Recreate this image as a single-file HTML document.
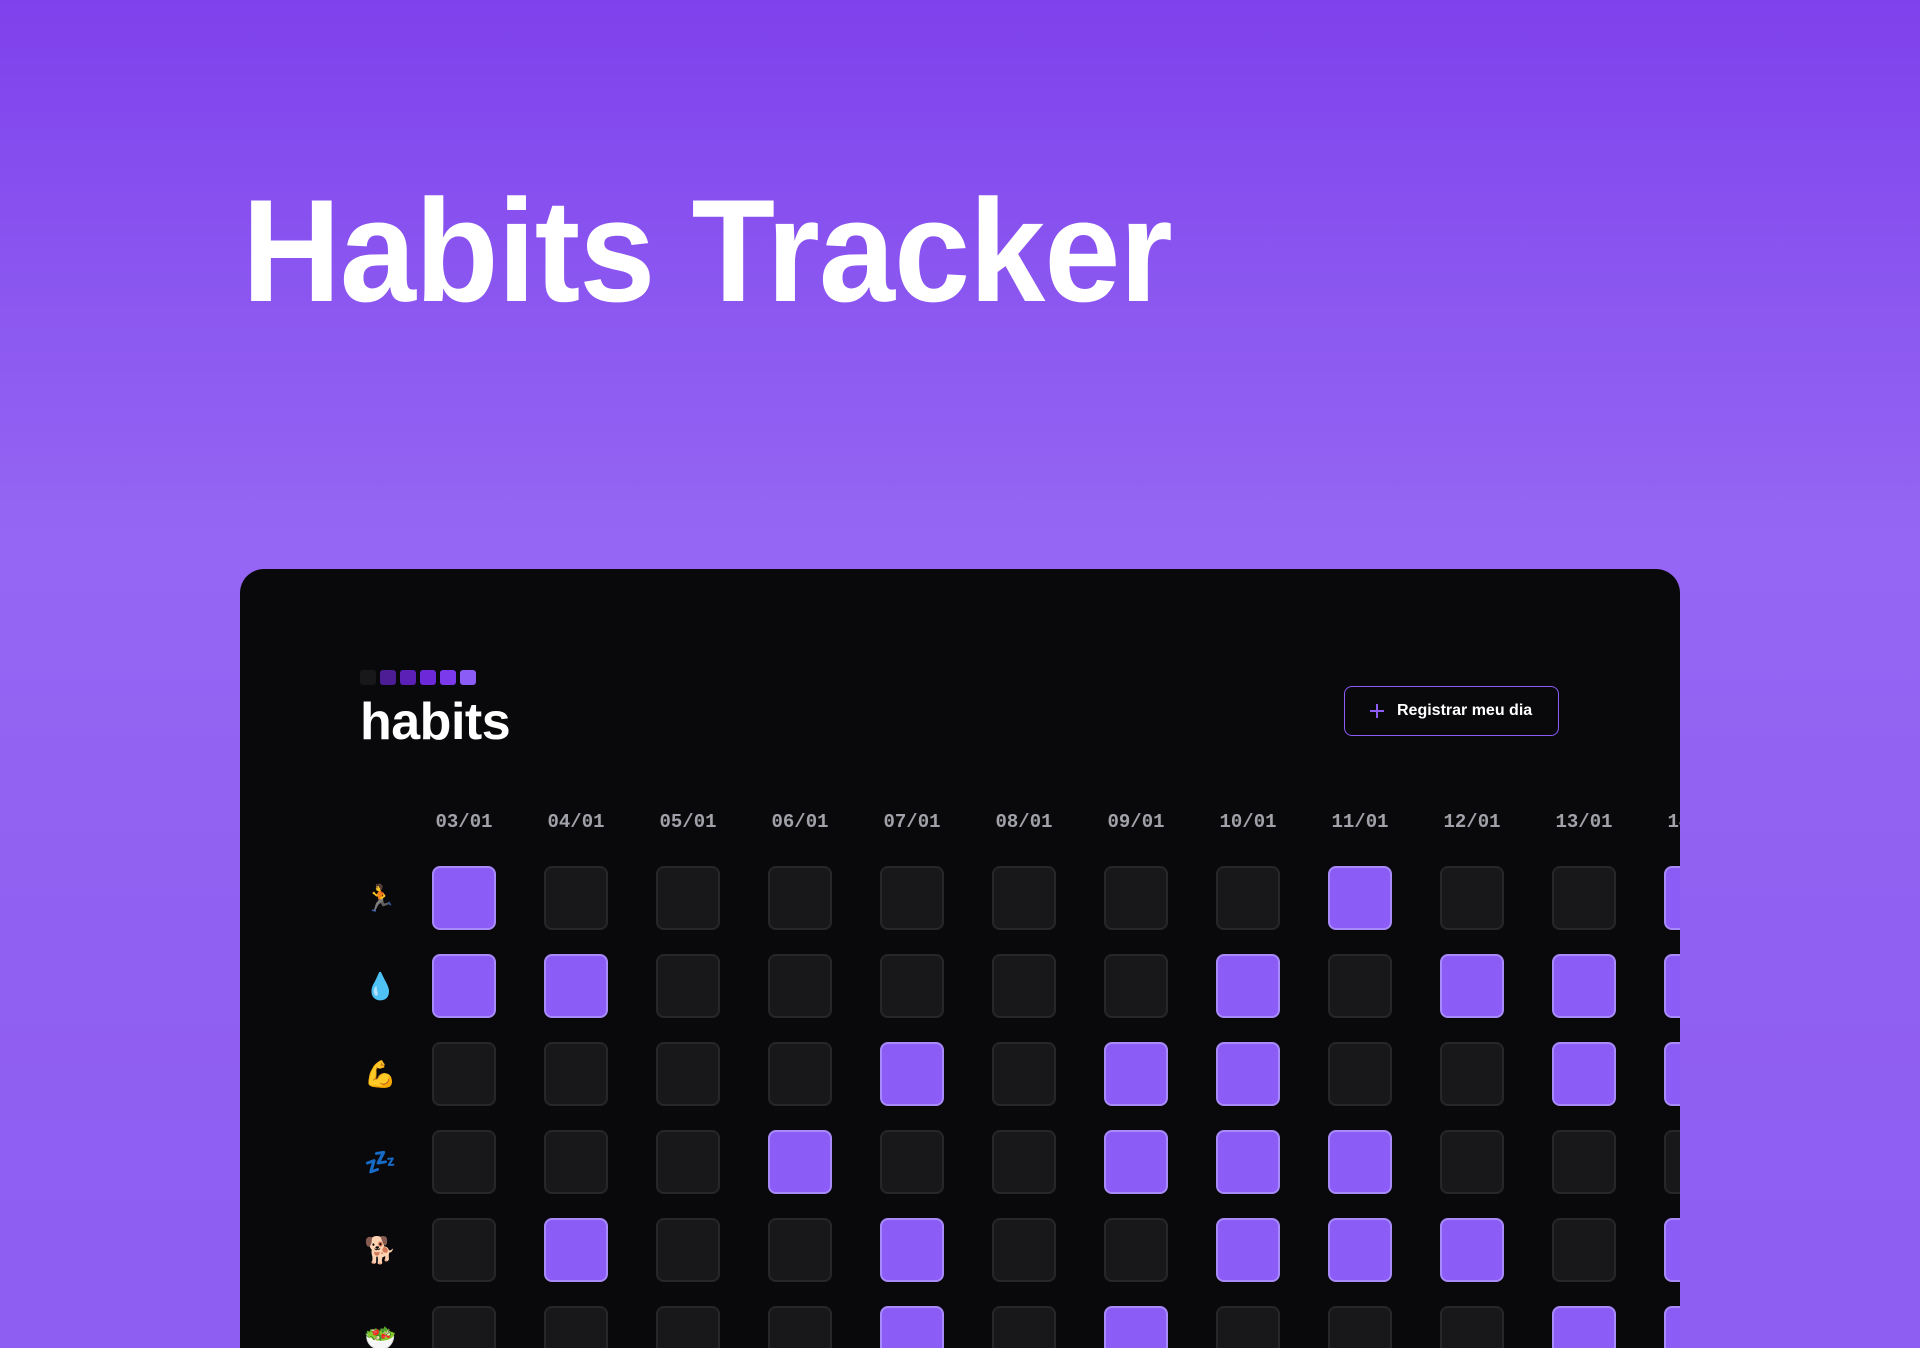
<!DOCTYPE html>
<html><head><meta charset="utf-8"><style>
*{margin:0;padding:0;box-sizing:border-box}
html,body{width:1920px;height:1348px;overflow:hidden}
body{background:linear-gradient(180deg,#7f41ec 0%,#8a55f0 20%,#9566f3 40%,#9060f2 70%,#8e5df2 100%);font-family:"Liberation Sans",sans-serif;position:relative}
.title{position:absolute;left:242px;top:178px;font-size:146px;line-height:146px;font-weight:bold;color:#fff;transform:scaleX(0.937);transform-origin:left top;white-space:nowrap;letter-spacing:-1px}
.panel{position:absolute;left:240px;top:569px;width:1440px;height:779px;background:#09090b;border-radius:24px 24px 0 0;overflow:hidden}
.legend{position:absolute;left:120px;top:101px;display:flex;gap:4px}
.legend div{width:16px;height:15px;border-radius:3px}
.h{position:absolute;left:120px;top:127px;font-size:52px;line-height:52px;font-weight:bold;color:#fff;letter-spacing:-0.5px}
.btn{position:absolute;left:1104px;top:117px;width:215px;height:50px;border:1.5px solid #8b5cf6;border-radius:8px;color:#fff;font-size:16px;font-weight:bold;display:flex;align-items:center;padding-left:24px}
.btn svg{margin-right:12px}
.date{position:absolute;top:241px;font-family:"Liberation Mono",monospace;font-weight:bold;font-size:19px;color:#a1a1aa;width:64px;text-align:center;line-height:24px}
.box{position:absolute;width:64px;height:64px;border-radius:8px;background:#18181b;border:2px solid #27272a}
.box.on{background:#8b5cf6;border-color:#a78bfa}
.emo{position:absolute;left:124px;width:32px;text-align:center;font-size:26px;line-height:32px}
</style></head><body>
<div class="title">Habits Tracker</div>
<div class="panel">
<div class="legend"><div style="background:#18181b"></div><div style="background:#4c1d95"></div><div style="background:#5b21b6"></div><div style="background:#6d28d9"></div><div style="background:#7c3aed"></div><div style="background:#8b5cf6"></div></div>
<div class="h">habits</div>
<div class="btn"><svg width="16" height="16" viewBox="0 0 16 16"><path d="M8 1v14M1 8h14" stroke="#8b5cf6" stroke-width="2"/></svg>Registrar meu dia</div>
<div id="g"></div>
</div>
<script>
var g=document.getElementById('g'),h='';
var dates=['03/01','04/01','05/01','06/01','07/01','08/01','09/01','10/01','11/01','12/01','13/01','14/01'];
var on=[[0,8,11],[0,1,7,9,10,11],[4,6,7,10,11],[3,6,7,8],[1,4,7,8,9,11],[4,6,10,11]];
var emo=['🏃','💧','💪','💤','🐕','🥗'];
for(var c=0;c<12;c++){h+='<div class="date" style="left:'+(192+c*112)+'px">'+dates[c]+'</div>';}
for(var r=0;r<6;r++){var y=297+r*88;h+='<div class="emo" style="top:'+(y+16)+'px">'+emo[r]+'</div>';
for(var c=0;c<12;c++){h+='<div class="box'+(on[r].indexOf(c)>=0?' on':'')+'" style="left:'+(192+c*112)+'px;top:'+y+'px"></div>';}}
g.innerHTML=h;
</script>
</body></html>
